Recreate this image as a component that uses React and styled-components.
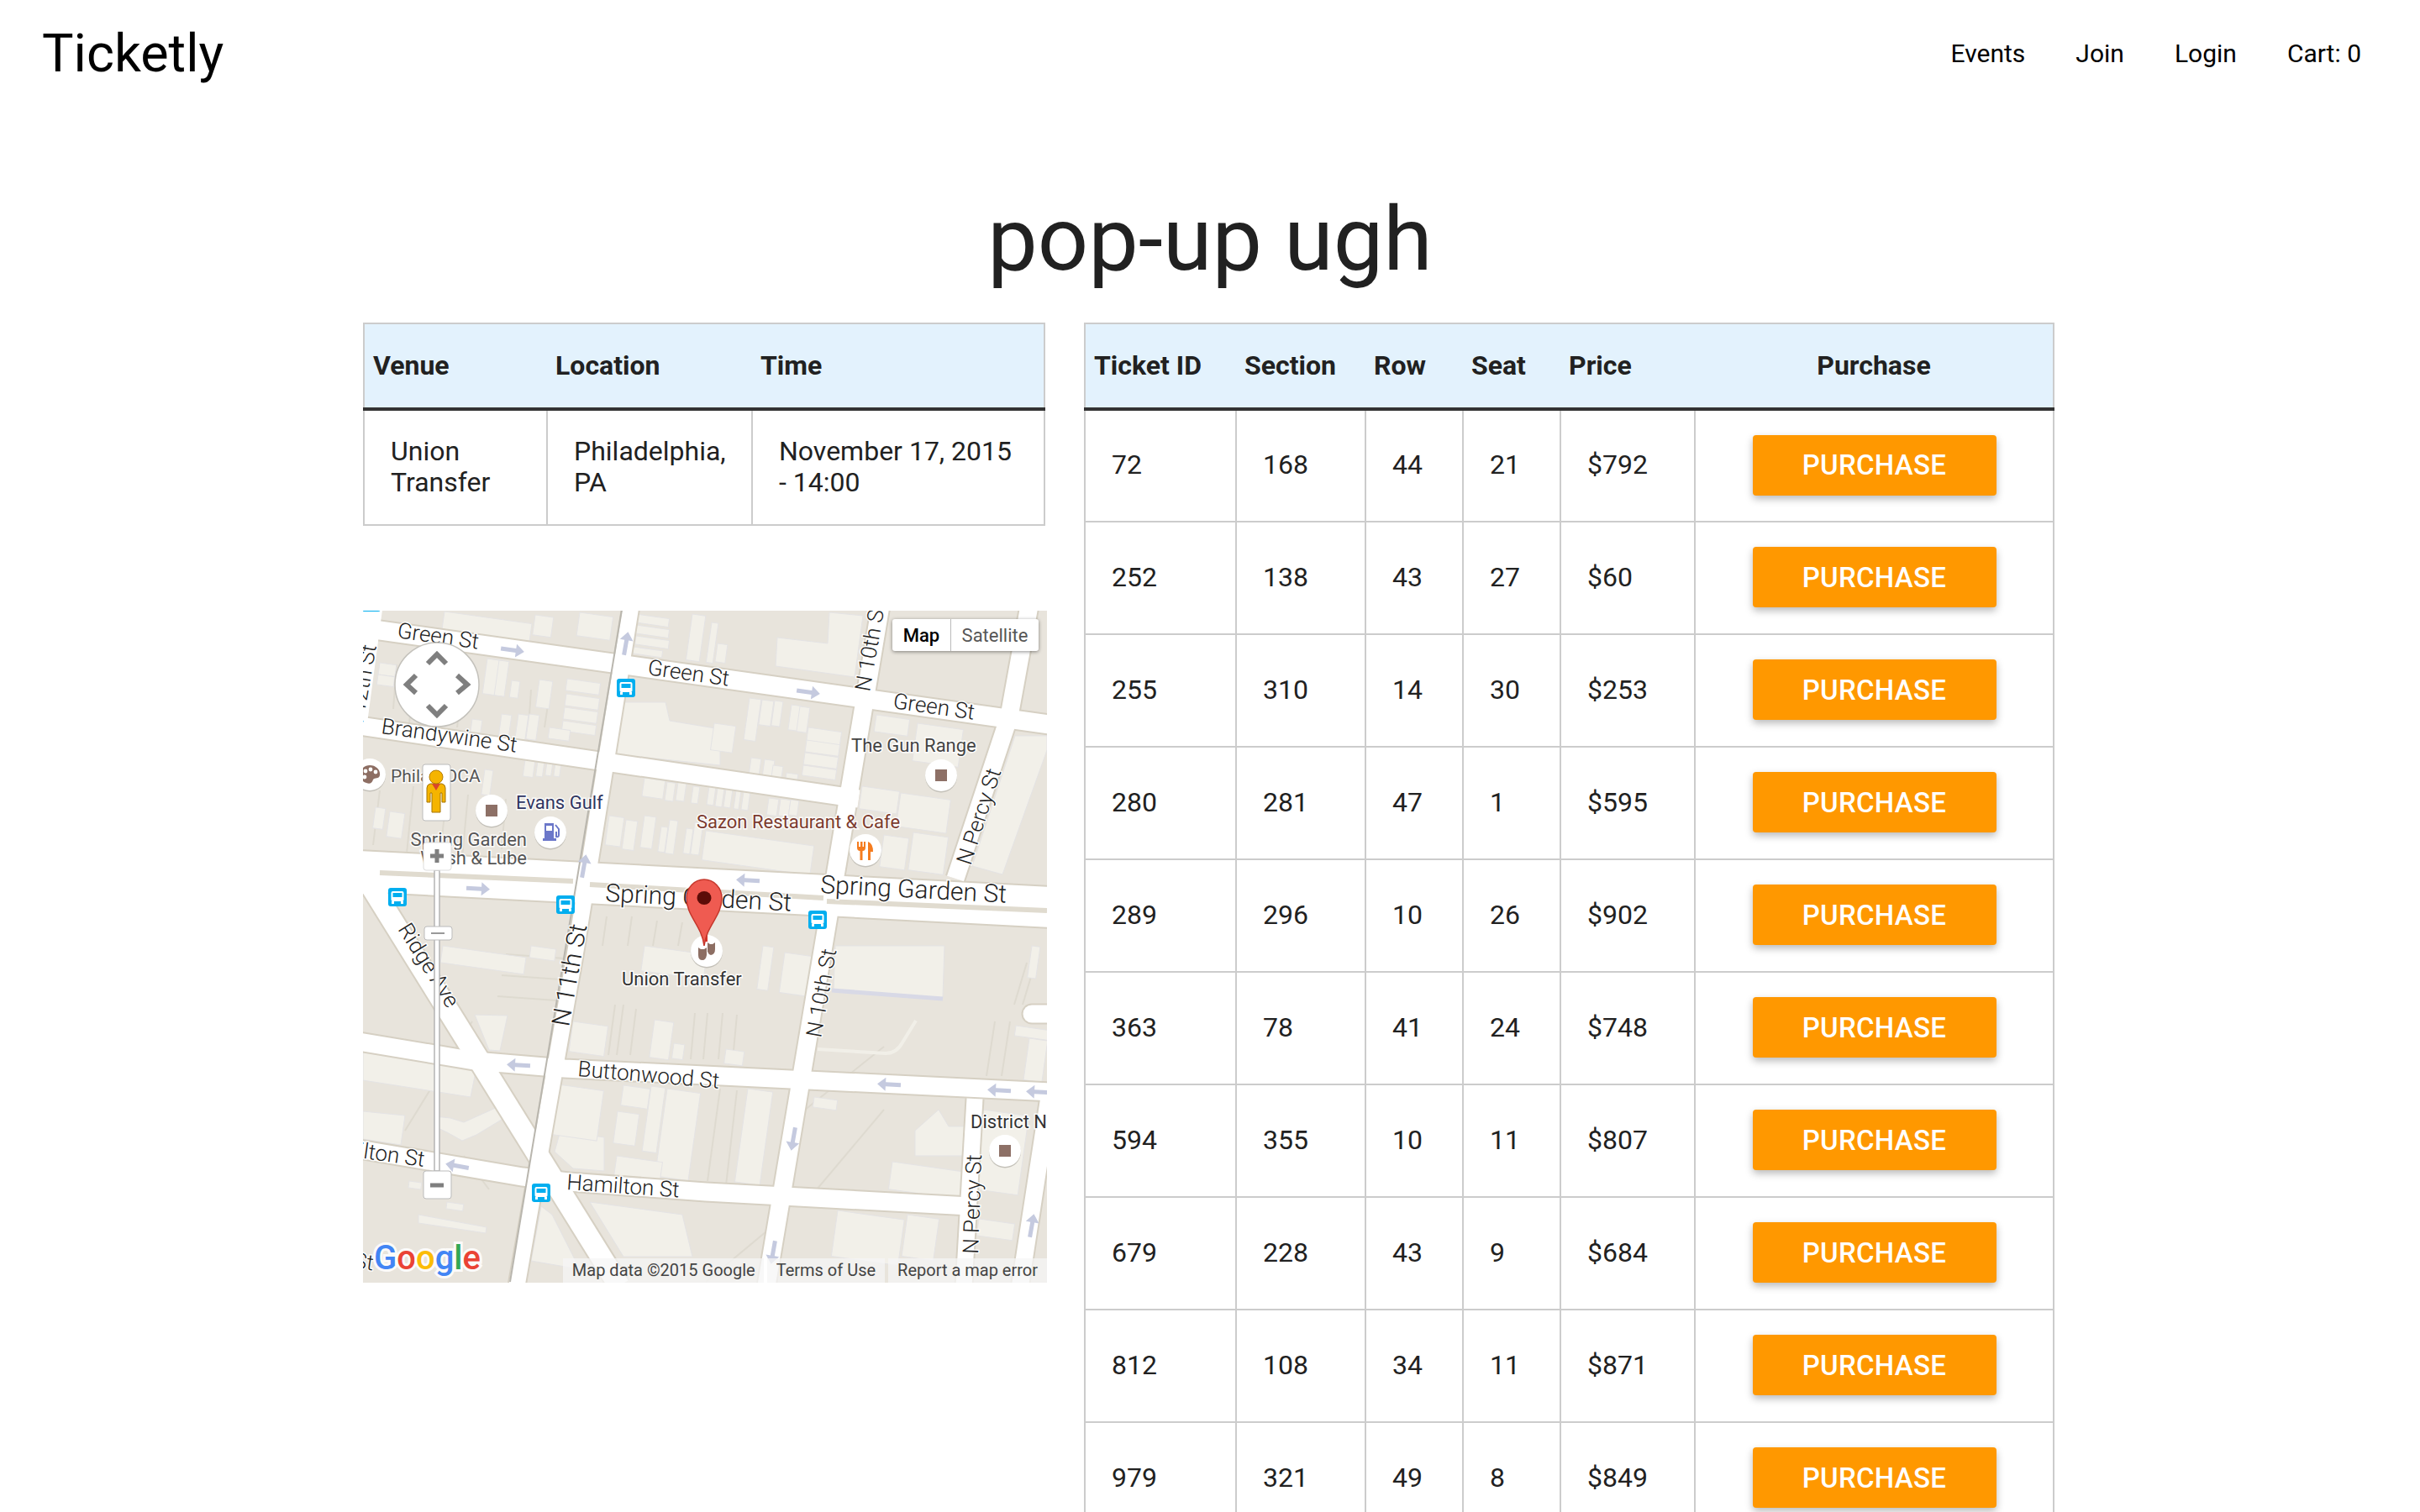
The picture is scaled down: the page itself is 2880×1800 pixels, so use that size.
import React from 'react';
import styled, { createGlobalStyle } from 'styled-components';

const GlobalStyle = createGlobalStyle`
  html, body { margin: 0; padding: 0; background: #fff; }
  body { font-family: Roboto, "Liberation Sans", sans-serif; color: #212121; }
  #root { height: 100vh; overflow: hidden; }
`;

// HEADER
const Header = styled.header`
  display: flex;
  justify-content: space-between;
  align-items: center;
  height: 126px;
  padding: 0 70px 0 50px;
`;

const Logo = styled.a`
  font-size: 63px;
  color: #000;
`;

const Nav = styled.nav`
  display: flex;
  gap: 60px;
`;

const NavLink = styled.a`
  font-size: 30px;
  color: #000;
`;

const Title = styled.h1`
  margin: 0;
  height: 258px;
  padding-top: 93px;
  box-sizing: border-box;
  text-align: center;
  font-size: 106px;
  line-height: 132px;
  font-weight: 400;
  color: #212121;
`;

// TABLES
const Content = styled.main`
  display: flex;
  gap: 44px;
  padding-left: 432px;
  align-items: flex-start;
`;

const LeftColumn = styled.div`
  display: flex;
  flex-direction: column;
  gap: 101px;
  width: 814px;
`;

const Table = styled.table`
  width: ${(p) => p.$width}px;
  table-layout: fixed;
  border-collapse: collapse;
  font-size: 32px;
  line-height: 37px;
  color: #212121;
  flex: none;
`;

const HeadRow = styled.tr`
  height: 102px;
  background: #e3f2fd;
  border-bottom: 4px solid #333;
`;

const Th = styled.th`
  padding: 0 10px;
  text-align: ${(p) => (p.$center ? 'center' : 'left')};
  font-weight: 700;
  font-size: 32px;
  border-top: 2px solid #ccc;
  &:first-child { border-left: 2px solid #ccc; }
  &:last-child { border-right: 2px solid #ccc; }
`;

const BodyRow = styled.tr`
  height: ${(p) => p.$height}px;
  border-bottom: 2px solid #ccc;
`;

const Td = styled.td`
  padding: 0 31px 2px;
  border-left: 2px solid #ccc;
  text-align: ${(p) => (p.$center ? 'center' : 'left')};
  &:last-child { border-right: 2px solid #ccc; }
`;

const PurchaseButton = styled.button`
  width: 290px;
  height: 72px;
  border: 0;
  border-radius: 4px;
  background: #ff9800;
  color: #fff;
  font-family: inherit;
  font-size: 33px;
  font-weight: 500;
  letter-spacing: 0.3px;
  box-shadow: 0 4px 10px rgba(0, 0, 0, 0.28);
  vertical-align: middle;
`;

// MAP
const MapBox = styled.div`
  position: relative;
  width: 814px;
  height: 800px;
  overflow: hidden;
  background: #e8e4dc;
`;

const MapDrawing = styled.svg`
  display: block;
  font-family: Roboto, sans-serif;
`;

const Label = styled.text`
  font-size: ${(p) => p.$size || 26}px;
  font-weight: ${(p) => p.$weight || 300};
  fill: ${(p) => p.$color || '#222'};
  stroke: rgba(255, 255, 255, 0.85);
  stroke-width: ${(p) => p.$halo || 3}px;
  paint-order: stroke;
`;

const MapType = styled.div`
  position: absolute;
  top: 10px;
  left: 630px;
  display: flex;
  height: 38px;
  border-radius: 3px;
  background: #fff;
  box-shadow: 0 1px 4px rgba(0, 0, 0, 0.45);
  font-size: 22px;
`;

const MapTypeItem = styled.div`
  display: flex;
  align-items: center;
  justify-content: center;
  width: ${(p) => p.$width}px;
  font-weight: ${(p) => (p.$active ? 500 : 400)};
  color: ${(p) => (p.$active ? '#000' : '#565656')};
  & + & { border-left: 1px solid #bbb; }
`;

const Attribution = styled.div`
  position: absolute;
  right: 0;
  bottom: 0;
  display: flex;
  height: 29px;
  font-size: 20px;
  line-height: 29px;
  color: #444;
`;

const AttributionItem = styled.span`
  padding: 0 ${(p) => p.$right}px 0 ${(p) => p.$left}px;
  background: rgba(245, 245, 245, 0.75);
  & + & { margin-left: 4px; }
`;

const streets = [
  { d: 'M-5,21 L820,137', w: 22 },
  { d: 'M-5,138 L590,225', w: 21 },
  { d: 'M-5,311 L820,354', w: 48 },
  { d: 'M319,-5 L254,400 L183,805', w: 19 },
  { d: 'M616,-5 L480,805', w: 21 },
  { d: 'M793,-5 L769,127 L705,320', w: 21 },
  { d: 'M728,582 L715,805', w: 19 },
  { d: 'M818,570 L785,785 L782,805', w: 20 },
  { d: 'M-5,514 L133,537 L240,546 L820,574', w: 21 },
  { d: 'M-5,642 L190,675 L245,681 L408,693 L722,710', w: 21 },
  { d: 'M4,320 L305,805', w: 25 },
  { d: 'M796,481 L820,481', w: 21, round: true },
];

const polygons = [
  '493,33 553,40 555,3 595,7 585,80 491,67',
  '305,110 360,110 365,132 425,142 425,185 300,172',
  '776,150 814,150 814,167 761,315 725,305',
  '133,482 172,483 163,525 150,524',
  '0,527 135,545 128,580 0,560',
  '0,597 50,602 45,637 0,630',
  '85,603 104,605 120,610 160,592 168,605 135,625 118,632 100,622 85,615',
  '212,710 225,720 258,785 200,775',
  '270,705 380,720 392,770 310,770',
  '66,720 147,735 146,742 66,730',
  '562,400 692,400 690,462 560,452',
  '657,620 685,595 697,615 720,615 720,650 657,650',
  '228,645 235,620 287,628 287,668 250,665',
];

// x, y, w, h of a building, turned with the street grid
const lots = [
  [97, 2, 105, 22], [205, 6, 22, 24], [258, 3, 40, 28],
  [20, 63, 20, 14], [18, 77, 20, 12],
  [148, 58, 16, 42], [162, 60, 12, 42], [177, 84, 10, 20], [210, 83, 16, 33],
  [243, 82, 40, 14], [242, 100, 40, 14], [240, 116, 40, 14], [238, 132, 40, 12],
  [222, 140, 25, 13], [165, 124, 12, 30], [185, 124, 12, 30], [198, 124, 12, 30], [130, 130, 12, 25],
  [193, 178, 12, 20], [208, 180, 8, 18], [219, 181, 7, 16], [229, 182, 7, 16],
  [32, 240, 18, 30], [15, 235, 12, 25], [145, 190, 10, 30],
  [325, 5, 40, 10], [325, 18, 40, 10], [325, 31, 40, 10], [322, 44, 35, 8], [392, 5, 16, 55],
  [335, 200, 25, 22], [362, 205, 10, 22], [375, 205, 10, 22], [393, 210, 8, 20],
  [293, 245, 18, 35], [313, 250, 14, 35], [335, 245, 14, 38], [355, 258, 8, 30],
  [365, 250, 10, 40], [385, 260, 8, 30], [395, 253, 10, 38],
  [415, 15, 8, 48], [422, 40, 12, 22],
  [460, 105, 14, 50], [475, 107, 14, 30], [490, 108, 10, 30], [510, 113, 12, 30], [520, 115, 12, 30],
  [418, 135, 26, 32], [530, 140, 40, 16], [528, 155, 40, 14], [526, 170, 40, 14], [524, 185, 40, 12],
  [462, 176, 12, 24], [478, 178, 12, 22], [488, 185, 12, 22], [504, 194, 14, 14],
  [412, 210, 8, 22], [422, 212, 8, 22], [432, 213, 8, 22], [444, 215, 6, 22], [453, 216, 8, 22],
  [483, 224, 12, 20], [497, 225, 12, 20], [509, 226, 10, 18], [408, 263, 130, 35],
  [611, 125, 40, 20], [660, 135, 55, 45], [594, 210, 45, 27], [640, 218, 60, 40],
  [620, 268, 30, 38], [655, 265, 42, 45],
  [95, 400, 100, 20], [200, 400, 30, 14], [335, 400, 75, 30],
  [250, 490, 42, 36], [347, 488, 23, 45], [370, 516, 13, 18],
  [232, 565, 55, 60], [303, 597, 26, 38], [310, 566, 32, 24], [343, 567, 17, 78], [362, 570, 40, 105],
  [302, 650, 55, 24], [100, 705, 20, 8], [55, 680, 15, 8],
  [476, 400, 13, 52], [502, 408, 33, 48], [458, 570, 30, 112], [432, 523, 22, 17], [537, 580, 28, 12],
  [630, 657, 88, 33], [738, 595, 55, 95], [733, 725, 43, 20], [565, 715, 80, 55], [648, 720, 38, 50],
  [777, 495, 40, 12], [793, 510, 22, 50], [796, 400, 10, 38],
];

const lotLines = [
  'M40,65 L36,118', 'M60,85 L55,135', 'M95,80 L90,130', 'M118,90 L112,140', 'M200,95 L195,170', 'M222,100 L216,140',
  'M20,215 L12,280', 'M60,210 L52,290', 'M100,215 L92,290', 'M125,220 L118,295', 'M170,225 L165,285',
  'M300,470 L292,530', 'M310,470 L302,530', 'M325,475 L318,530', 'M395,480 L390,535', 'M410,480 L405,535', 'M428,480 L423,535', 'M445,482 L440,535',
  'M20,530 L15,560', 'M40,532 L35,565', 'M62,535 L58,568', 'M85,540 L80,572', 'M108,542 L104,575',
  'M20,600 L16,632', 'M32,600 L28,634',
  'M425,570 L410,680', 'M445,572 L432,685', 'M525,580 L510,685',
  'M520,600 L620,520', 'M540,690 L620,595', 'M480,740 L408,800',
  'M130,490 L50,620', 'M120,650 L150,690',
  'M260,360 L255,395', 'M290,365 L285,400', 'M320,365 L315,400', 'M350,370 L345,400', 'M380,372 L375,400',
  'M170,410 L240,415', 'M165,435 L235,440', 'M160,460 L230,465',
  'M790,420 L775,470', 'M800,420 L785,470', 'M752,490 L742,555', 'M770,490 L760,555',
];

const arrows = [
  [178, 48, 8], [313, 40, -80], [137, 332, 3], [263, 305, -80], [530, 98, 8], [458, 322, 183],
  [185, 542, 183], [112, 662, 190], [626, 565, 183], [757, 572, 183], [803, 574, 183],
  [512, 630, 100], [488, 765, 100], [796, 733, -80],
];

const buses = [[10, -9], [313, 93], [41, 342], [241, 351], [541, 369], [212, 694]];

const streetLabels = [
  { t: 'Green St', x: 40, y: 33, r: 8 },
  { t: 'Green St', x: 338, y: 77, r: 8 },
  { t: 'Green St', x: 630, y: 117, r: 8 },
  { t: 'Brandywine St', x: 21, y: 147, r: 8 },
  { t: 'Spring Garden St', x: 288, y: 347, r: 3, s: 30 },
  { t: 'Spring Garden St', x: 544, y: 337, r: 3, s: 30 },
  { t: 'N 10th St', x: 603, y: 98, r: -80 },
  { t: 'N 10th St', x: 545, y: 510, r: -80 },
  { t: 'N 11th St', x: 245, y: 497, r: -80, s: 30 },
  { t: 'N Percy St', x: 723, y: 305, r: -72 },
  { t: 'N Percy St', x: 732, y: 767, r: -88 },
  { t: 'Ridge Ave', x: 41, y: 380, r: 58 },
  { t: 'Buttonwood St', x: 255, y: 555, r: 5 },
  { t: 'Hamilton St', x: 242, y: 690, r: 4 },
  { t: 'Hamilton St', x: 72, y: 663, r: 8, end: true },
  { t: 'N 12th St', x: 16, y: 43, r: -80, end: true },
  { t: 'St', x: -12, y: 783, r: 8 },
];

const placeLabels = [
  { t: 'PhilaMOCA', x: 33, y: 205, c: '#555', s: 21 },
  { t: 'Evans Gulf', x: 182, y: 237, c: '#2f3561' },
  { t: 'Spring Garden', x: 195, y: 281, c: '#555', end: true },
  { t: 'Wash & Lube', x: 195, y: 303, c: '#555', end: true },
  { t: 'The Gun Range', x: 581, y: 169, c: '#444' },
  { t: 'Sazon Restaurant & Cafe', x: 397, y: 260, c: '#7b3b2e' },
  { t: 'Union Transfer', x: 308, y: 447, c: '#333' },
  { t: 'District N', x: 723, y: 617, c: '#333' },
];

const Bus = ({ x, y }) => (
  <g transform={`translate(${x} ${y})`}>
    <rect x="-11" y="-11" width="22" height="22" rx="3" fill="#00aeef" />
    <rect x="-7.5" y="-7" width="15" height="12" rx="2" fill="#fff" />
    <rect x="-5.5" y="-5" width="11" height="5" fill="#00aeef" />
    <rect x="-7" y="5" width="3" height="3" fill="#fff" />
    <rect x="4" y="5" width="3" height="3" fill="#fff" />
  </g>
);

const Poi = ({ x, y, children }) => (
  <g transform={`translate(${x} ${y})`}>
    <circle cy="1.5" r="19" fill="#c4c1b9" />
    <circle r="19" fill="#fff" />
    {children}
  </g>
);

const Square = () => <rect x="-7" y="-7" width="14" height="14" fill="#8d7066" />;

const CityMap = () => (
  <MapBox>
    <MapDrawing width="814" height="800" viewBox="0 1 814 800">
      <rect x="0" y="0" width="814" height="802" fill="#e8e4dc" />

      {lotLines.map((d, i) => <path key={i} d={d} stroke="#dedad0" strokeWidth="2" fill="none" />)}
      {polygons.map((p, i) => <polygon key={i} points={p} fill="#f2f0e9" stroke="#e4e3e4" />)}
      {lots.map(([x, y, w, h], i) => (
        <rect key={i} x={x} y={y} width={w} height={h} transform={`rotate(8 ${x} ${y})`} fill="#f2f0e9" stroke="#e4e3e4" />
      ))}
      <path d="M541,523 L622,528 Q635,528 642,515 L658,489" fill="none" stroke="#f1efe8" strokeWidth="4" />
      <path d="M558,453 L690,463" fill="none" stroke="#d8d9e6" strokeWidth="5" />

      {streets.map((s, i) => (
        <path key={i} d={s.d} fill="none" stroke="#d6d0c3" strokeWidth={s.w + 4} strokeLinecap={s.round ? 'round' : 'butt'} />
      ))}
      {streets.map((s, i) => (
        <path key={i} d={s.d} fill="none" stroke="#fff" strokeWidth={s.w} strokeLinecap={s.round ? 'round' : 'butt'} />
      ))}
      <polygon points="-5,0 23,0 5,135 -5,135" fill="#fff" />
      <path d="M20,313 L250,323 M270,327 L548,343 M552,347 L814,358" stroke="#e0dbcf" strokeWidth="6" fill="none" />
      <path d="M308,0 L175,800" stroke="#b9b6ae" strokeWidth="2" fill="none" />

      {arrows.map(([x, y, r], i) => (
        <path key={i} d="M-14,-2.5 H4 V-8 L14,0 L4,8 V2.5 H-14Z" fill="#c5cadf" transform={`translate(${x} ${y}) rotate(${r})`} />
      ))}

      {streetLabels.map((l, i) => (
        <Label key={i} $size={l.s} x={l.x} y={l.y} textAnchor={l.end ? 'end' : 'start'} transform={`rotate(${l.r} ${l.x} ${l.y})`}>{l.t}</Label>
      ))}
      {placeLabels.map((l, i) => (
        <Label key={i} $size={l.s || 22} $weight={400} $color={l.c} x={l.x} y={l.y} textAnchor={l.end ? 'end' : 'start'}>{l.t}</Label>
      ))}

      {buses.map(([x, y], i) => <Bus key={i} x={x} y={y} />)}

      <Poi x={8} y={196}>
        <path d="M0,-11 C8,-11 13,-5 12,1 C11,6 6,3 4,6 C3,10 0,12 -4,10 C-10,8 -13,3 -11,-3 C-10,-8 -5,-11 0,-11Z" fill="#8d6e63" />
        <circle cx="-5" cy="-4" r="2.4" fill="#fff" />
        <circle cx="1" cy="-6" r="2.4" fill="#fff" />
        <circle cx="7" cy="-3" r="2.4" fill="#fff" />
        <circle cx="-6" cy="3" r="2.4" fill="#fff" />
      </Poi>
      <Poi x={153} y={239}><Square /></Poi>
      <Poi x={688} y={197}><Square /></Poi>
      <Poi x={764} y={644}><Square /></Poi>
      <Poi x={223} y={265}>
        <path d="M-7,-11 H4 V7 H-7Z M-9,7 H7 V10 H-9Z" fill="#6b77c9" />
        <rect x="-5" y="-8" width="7" height="6" fill="#fff" />
        <path d="M6,-9 L10,-4 V3 Q10,6 7,5 V-1" fill="none" stroke="#6b77c9" strokeWidth="2" />
      </Poi>
      <Poi x={598} y={286}>
        <path d="M-10,-10 V-3 Q-10,1 -6.5,1 V12 H-3.5 V1 Q0,1 0,-3 V-10 H-2 V-4 H-3.5 V-10 H-6 V-4 H-8 V-10Z" fill="#f57c1f" />
        <path d="M3,12 V-10 Q9,-8 9,2 H6 V12Z" fill="#f57c1f" />
      </Poi>
      <Poi x={409} y={406}>
        <path d="M-10,-4 L-7,-2 H-3 L0,-4 V5 Q-1,11 -5,11 Q-10,11 -10,5Z" fill="#8d6e63" />
        <path d="M1,-10 L4,-8 H7 L10,-10 V-2 Q10,4 5,5 Q2,4 1,1Z" fill="#8d6e63" />
        <rect x="-2" y="-19" width="3" height="8" fill="#d93025" />
      </Poi>

      <path d="M406,400 C403,375 385,365 385,343 A21,22 0 1 1 427,343 C427,365 409,375 406,400Z" fill="#ef5b51" stroke="#c5372c" strokeWidth="1.5" />
      <ellipse cx="406" cy="343" rx="8.5" ry="8" fill="#5c0c08" />

      {/* pan control */}
      <circle cx="88" cy="89" r="50" fill="#fff" stroke="#c4c2bc" strokeWidth="1.5" />
      <path d="M77,64 L88,53 L99,64 M77,114 L88,125 L99,114 M63,78 L52,89 L63,99 M112,78 L124,89 L112,99" fill="none" stroke="#7f7f7f" strokeWidth="6" />

      {/* pegman */}
      <rect x="71" y="184" width="33" height="67" rx="3" fill="#fff" stroke="#bbb" />
      <path d="M80,207 H94 Q98,208 98,212 V229 H94 V218 H92 V241 H82 V218 H80 V229 H76 V212 Q76,208 80,207Z" fill="#f5b400" stroke="#a57500" strokeWidth="1" />
      <path d="M82,207 H92 L87,215Z" fill="#d9472b" />
      <circle cx="87" cy="199" r="8" fill="#f5b400" stroke="#b47b00" />

      {/* zoom control */}
      <rect x="85" y="310" width="6" height="358" fill="#fff" stroke="#b4b4b4" strokeWidth="1.5" />
      <rect x="72" y="277" width="33" height="33" rx="3" fill="#fff" stroke="#ddd" />
      <path d="M88,285 V301 M80,293 H96" stroke="#7f7f7f" strokeWidth="5" />
      <rect x="73" y="377" width="33" height="16" rx="3" fill="#fff" stroke="#bbb" />
      <path d="M81,385 H97" stroke="#999" strokeWidth="2" />
      <rect x="72" y="668" width="33" height="33" rx="3" fill="#fff" stroke="#bbb" />
      <path d="M80,685 H96" stroke="#7f7f7f" strokeWidth="5" />

      <Label $size={40} $weight={500} $halo={6} x="13" y="785">
        <tspan fill="#4285f4">G</tspan><tspan fill="#ea4335">o</tspan><tspan fill="#fbbc05">o</tspan><tspan fill="#4285f4">g</tspan><tspan fill="#34a853">l</tspan><tspan fill="#ea4335">e</tspan>
      </Label>
    </MapDrawing>
    <MapType>
      <MapTypeItem $width={69} $active>Map</MapTypeItem>
      <MapTypeItem $width={104}>Satellite</MapTypeItem>
    </MapType>
    <Attribution>
      <AttributionItem $left={11} $right={10}>Map data ©2015 Google</AttributionItem>
      <AttributionItem $left={11} $right={11}>Terms of Use</AttributionItem>
      <AttributionItem $left={11} $right={11}>Report a map error</AttributionItem>
    </Attribution>
  </MapBox>
);

const tickets = [
  [72, 168, 44, 21, '$792'],
  [252, 138, 43, 27, '$60'],
  [255, 310, 14, 30, '$253'],
  [280, 281, 47, 1, '$595'],
  [289, 296, 10, 26, '$902'],
  [363, 78, 41, 24, '$748'],
  [594, 355, 10, 11, '$807'],
  [679, 228, 43, 9, '$684'],
  [812, 108, 34, 11, '$871'],
  [979, 321, 49, 8, '$849'],
];

const ticketColumns = [180, 154, 116, 116, 160, 427];
const eventColumns = [218, 244, 348];

const App = () => (
  <>
    <GlobalStyle />
    <Header>
      <Logo>Ticketly</Logo>
      <Nav>
        <NavLink>Events</NavLink>
        <NavLink>Join</NavLink>
        <NavLink>Login</NavLink>
        <NavLink>Cart: 0</NavLink>
      </Nav>
    </Header>
    <Title>pop-up ugh</Title>
    <Content>
      <LeftColumn>
        <Table $width={810}>
          <colgroup>{eventColumns.map((w) => <col key={w} width={w} />)}</colgroup>
          <thead>
            <HeadRow>
              <Th>Venue</Th>
              <Th>Location</Th>
              <Th>Time</Th>
            </HeadRow>
          </thead>
          <tbody>
            <BodyRow $height={138}>
              <Td>Union Transfer</Td>
              <Td>Philadelphia, PA</Td>
              <Td>November 17, 2015 - 14:00</Td>
            </BodyRow>
          </tbody>
        </Table>
        <CityMap />
      </LeftColumn>
      <Table $width={1153}>
        <colgroup>{ticketColumns.map((w, i) => <col key={i} width={w} />)}</colgroup>
        <thead>
          <HeadRow>
            <Th>Ticket ID</Th>
            <Th>Section</Th>
            <Th>Row</Th>
            <Th>Seat</Th>
            <Th>Price</Th>
            <Th $center>Purchase</Th>
          </HeadRow>
        </thead>
        <tbody>
          {tickets.map((t) => (
            <BodyRow key={t[0]} $height={134}>
              {t.map((v, i) => <Td key={i}>{v}</Td>)}
              <Td $center><PurchaseButton>PURCHASE</PurchaseButton></Td>
            </BodyRow>
          ))}
        </tbody>
      </Table>
    </Content>
  </>
);

export default App;
